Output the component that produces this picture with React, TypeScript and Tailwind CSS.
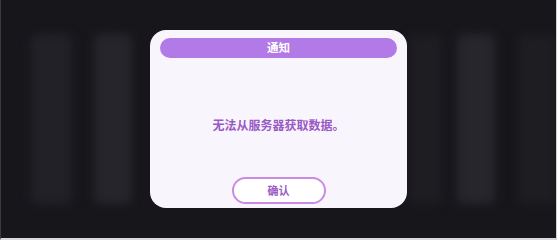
export default function App() {
  return (
    <div
      className="relative h-[240px] w-[557px] overflow-hidden border-b-2 border-l border-r border-b-[#d9d9de] border-l-[#3a3a42] border-r-[#cfcfd4] bg-[#17161b]"
      style={{ fontFamily: '"Noto Sans CJK SC", "Noto Sans", sans-serif' }}
    >
      {/* blurred page behind the dialog */}
      <div className="flex h-full items-center pl-[30px] blur-[5px]">
        <div className="h-[170px] w-[43px] rounded-md bg-[#222127]" />
        <div className="ml-[22px] h-[170px] w-[40px] rounded-md bg-[#26252b]" />
        <div className="ml-[277px] h-[170px] w-[35px] rounded-md bg-[#1e1d22]" />
        <div className="ml-[15px] h-[170px] w-[40px] rounded-md bg-[#27262c]" />
        <div className="ml-[23px] h-[170px] w-[40px] rounded-md bg-[#1e1d22]" />
      </div>

      {/* dialog */}
      <div className="absolute inset-0 flex items-center justify-center">
        <div className="flex h-[178px] w-[257px] flex-col items-center rounded-[16px] bg-[#f9f5fc] px-[10px] pt-[8px] pb-[4px]">
          <div className="flex h-[20px] w-full items-center justify-center rounded-full bg-[#b27ae6] text-[11.5px] font-bold text-white">
            通知
          </div>
          <div className="flex flex-1 items-center justify-center pt-[14px] text-[12px] font-bold text-[#9a5ac6]">
            无法从服务器获取数据。
          </div>
          <button className="flex h-[27px] w-[94px] items-center justify-center rounded-full border-2 border-[#c98be3] bg-white text-[11px] font-bold text-[#9a5ac6]">
            确认
          </button>
        </div>
      </div>
    </div>
  );
}
